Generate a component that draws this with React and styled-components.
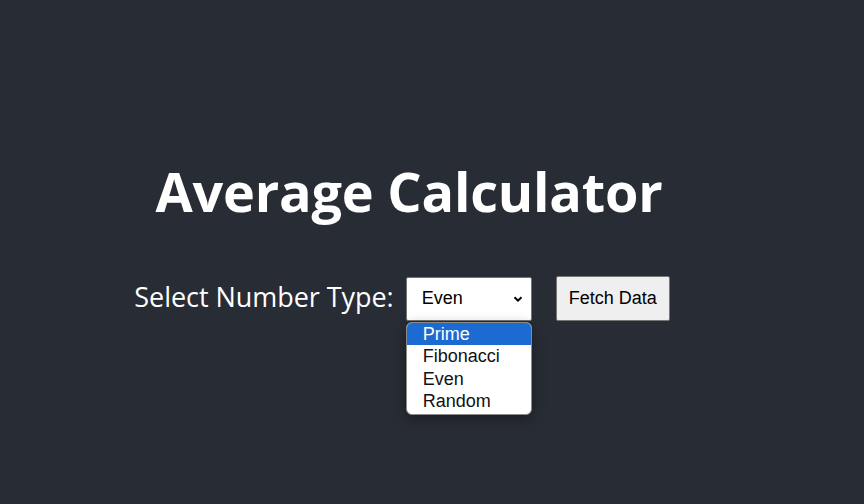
import React from "react";
import styled, { createGlobalStyle } from "styled-components";

const Global = createGlobalStyle`
  html, body { margin: 0; padding: 0; }
  body { background: #282c34; }
`;

const Page = styled.div`
  min-height: 504px;
  background: #282c34;
  display: flex;
  flex-direction: column;
  align-items: center;
  padding-top: 156px;
  padding-right: 56px;
  box-sizing: border-box;
  font-family: "Open Sans", "Noto Sans", sans-serif;
  color: #ffffff;
`;

const Title = styled.h1`
  margin: 0 0 0 10px;
  font-family: "Open Sans", "Noto Sans", sans-serif;
  font-weight: 700;
  font-size: 54px;
  line-height: 70px;
  letter-spacing: -0.2px;
`;

const Row = styled.div`
  display: flex;
  align-items: center;
  margin-top: 50px;
  margin-right: 4px;
`;

const Label = styled.label`
  font-size: 27px;
  letter-spacing: -0.05px;
  margin-right: 12px;
  margin-top: -4px;
`;

const SelectWrap = styled.div`
  position: relative;
  margin-right: 24px;
`;

const SelectBox = styled.div`
  width: 126px;
  height: 44px;
  box-sizing: border-box;
  background: #ffffff;
  border: 1px solid #767676;
  border-radius: 2px;
  display: flex;
  align-items: center;
  justify-content: space-between;
  padding: 0 7px 0 15px;
  font-family: "Liberation Sans", Arial, sans-serif;
  font-size: 18px;
  color: #000;
`;

const Button = styled.button`
  width: 114px;
  height: 45px;
  background: #efefef;
  border: 1px solid #767676;
  border-radius: 2px;
  font-family: "Liberation Sans", Arial, sans-serif;
  font-size: 18px;
  color: #000;
  padding: 0;
`;

const Menu = styled.ul`
  position: absolute;
  top: 45px;
  left: 0;
  width: 126px;
  box-sizing: border-box;
  margin: 0;
  padding: 0 0 1px;
  list-style: none;
  background: #ffffff;
  border: 1px solid #8a8a8a;
  border-radius: 6px;
  overflow: hidden;
  box-shadow: 0 4px 14px rgba(0, 0, 0, 0.35);
  font-family: "Liberation Sans", Arial, sans-serif;
  font-size: 18px;
  color: #111;
`;

const Option = styled.li`
  height: 22.5px;
  line-height: 22px;
  padding-left: 16px;
  background: ${(p) => (p.$active ? "#1b6bd2" : "transparent")};
  color: ${(p) => (p.$active ? "#ffffff" : "#111")};
`;

const Chevron = () => (
  <svg width="12" height="12" viewBox="0 0 12 12">
    <path d="M2.5 4.2 L6 7.7 L9.5 4.2" fill="none" stroke="#000" strokeWidth="2" />
  </svg>
);

export default function App() {
  const options = ["Prime", "Fibonacci", "Even", "Random"];
  return (
    <Page>
      <Global />
      <Title>Average Calculator</Title>
      <Row>
        <Label>Select Number Type:</Label>
        <SelectWrap>
          <SelectBox>
            <span>Even</span>
            <Chevron />
          </SelectBox>
          <Menu>
            {options.map((o, i) => (
              <Option key={o} $active={i === 0}>
                {o}
              </Option>
            ))}
          </Menu>
        </SelectWrap>
        <Button>Fetch Data</Button>
      </Row>
    </Page>
  );
}
